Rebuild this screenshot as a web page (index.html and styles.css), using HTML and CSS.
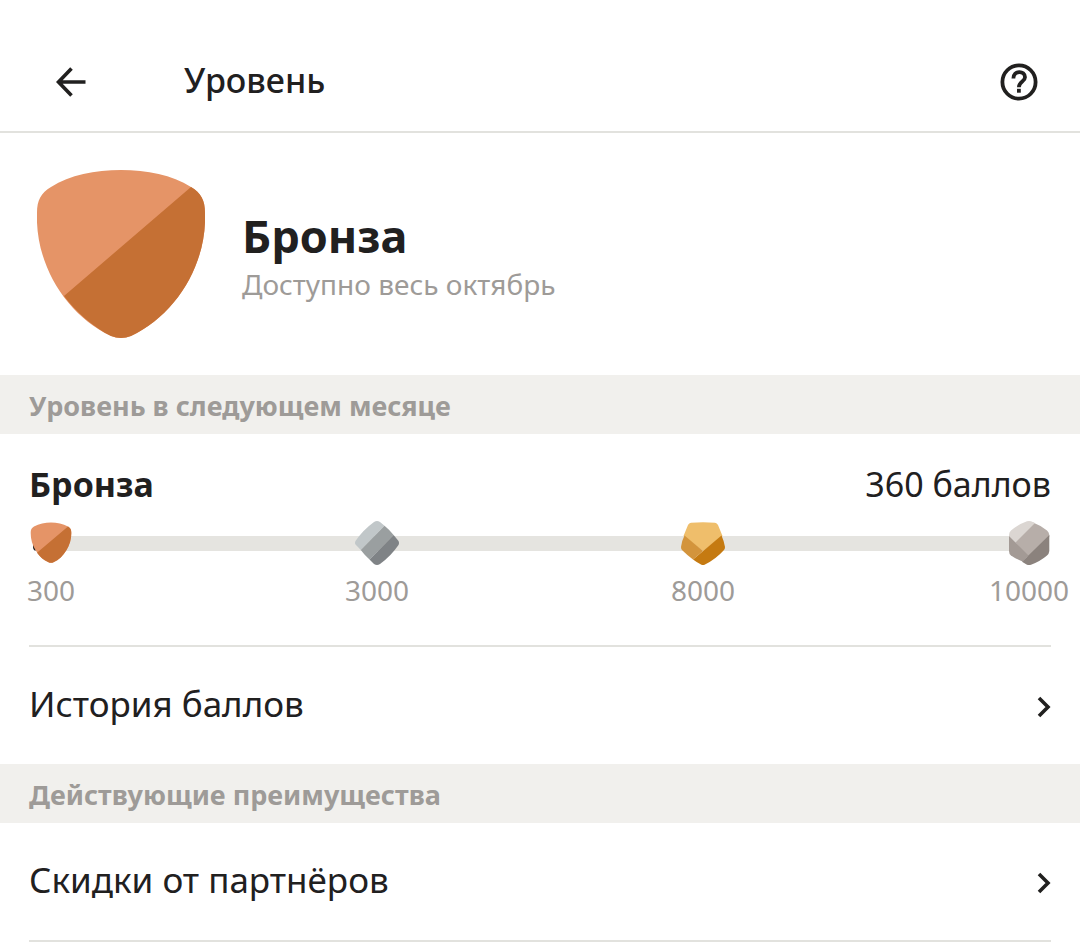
FILE: index.html
```html
<!DOCTYPE html>
<html lang="ru">
<head>
    <meta charset="utf-8">
    <meta name="viewport" content="width=device-width, initial-scale=1">
    <title>Уровень</title>
    <link rel="stylesheet" href="styles.css">
</head>
<body>
    <header class="header">
        <button class="icon-button" type="button" aria-label="Назад">
            <svg width="30" height="30" viewBox="0 0 30 30" fill="none" stroke="currentColor" stroke-width="3.6">
                <path d="M29.500 15H3M15.500 1.500L2.500 15L15.500 28.500"/>
            </svg>
        </button>
        <h1 class="header-title">Уровень</h1>
        <button class="icon-button" type="button" aria-label="Помощь">
            <svg width="38" height="38" viewBox="0 0 38 38" fill="none" stroke="currentColor" stroke-width="3.8">
                <circle cx="19" cy="19" r="16.600"/>
                <path d="M13.400 15.500C13.400 7 25 7.200 25 14.300C25 18.800 18.900 18.500 18.900 24.300"/>
                <path d="M18.900 25.800V29.700"/>
            </svg>
        </button>
    </header>

    <main>
        <section class="hero">
            <svg class="hero-badge" viewBox="0 0 168 168">
                <path fill="#e59467" d="M84 0C110 0 135 5 154 17C164 23 168 30 168 43C170 94 139 145 94 166Q84 170 74 166C29 145-2 94 0 43C0 30 4 23 14 17C33 5 58 0 84 0Z"/>
                <path fill="#c57034" d="M154 17C164 23 168 30 168 43C170 94 139 145 94 166Q84 170 74 166C56 157 40 143 27 126Z"/>
            </svg>
            <div class="hero-text">
                <h2 class="hero-title">Бронза</h2>
                <p class="hero-note">Доступно весь октябрь</p>
            </div>
        </section>

        <h3 class="section-title">Уровень в следующем месяце</h3>
        <section class="progress">
            <div class="progress-head">
                <strong>Бронза</strong>
                <span>360 баллов</span>
            </div>
            <ol class="levels">
                <li class="level">
                    <svg class="level-icon" viewBox="0 0 44 44">
                        <path fill="#21201f" d="M4 22H8V29.500H5.500Q4 28 4 26Z"/>
                        <path fill="#e59467" d="M22 1.500C28 1.500 34 2.700 39 5.500C41.500 7 42.300 8.500 42.300 12C42.500 24 35 36.500 24.500 41.300Q22 42.300 19.500 41.300C9 36.500 1.500 24 1.700 12C1.700 8.500 2.500 7 5 5.500C10 2.700 16 1.500 22 1.500Z"/>
                        <path fill="#c57034" d="M39 5.500C41.500 7 42.300 8.500 42.300 12C42.500 24 35 36.500 24.500 41.300Q22 42.300 19.500 41.300C15 39.300 11 36 8 31.700Z"/>
                    </svg>
                    <span>300</span>
                </li>
                <li class="level">
                    <svg class="level-icon" viewBox="0 0 44 44">
                        <path fill="#c1c7c9" d="M0.500 20Q8 9 19 1Q22-1 25 1L29.500 4.800L5.800 29Q2.500 25.500 0.500 23.500Q-0.500 22 0.500 20Z"/>
                        <path fill="#9a9fa0" d="M29.500 4.800Q34.500 8.800 38.600 14L14.500 38.500Q9.500 34 5.800 29Z"/>
                        <path fill="#7f8386" d="M38.600 14L43.500 20Q44.500 22 43.500 24Q36 35 25 43Q22 45 19 43L14.500 38.500Z"/>
                    </svg>
                    <span>3000</span>
                </li>
                <li class="level">
                    <svg class="level-icon" viewBox="0 0 44 44">
                        <path fill="#efbe6b" d="M10 1.800Q22 0.500 34 1.800Q36 2 37 4L41.500 15L22 30L2.500 15L7 4Q8 2 10 1.800Z"/>
                        <path fill="#d3943c" d="M3.500 14.500L22 30L12 38.500Q6 34 1 29Q0 28 0 26Q1 19 3.500 14.500Z"/>
                        <path fill="#c57a11" d="M40.500 14.500Q43 20 44 26Q44 28 43 29Q35 38 24 43.500Q22 44.500 20 43.500Q16 41.500 12 38.500Z"/>
                    </svg>
                    <span>8000</span>
                </li>
                <li class="level">
                    <svg class="level-icon" viewBox="0 0 44 44">
                        <path fill="#b7aea9" d="M26 1.500Q34 4.500 40 9.500Q42 11 42.300 14V16L21 36L8 21L22 5Z"/>
                        <path fill="#dbd6d2" d="M2 15V14Q2 11 4 9.500Q11 3.500 20 0.300Q22-0.300 24 0.300L28 2L8.500 21.500Z"/>
                        <path fill="#a39a95" d="M2 15L21.500 34.500L15.500 40.500Q9 38 4 34.500Q2 33 2 30Z"/>
                        <path fill="#8b827d" d="M42.300 14V30Q42 33 40 34.500Q33 40.500 24 43.700Q22 44.300 20 43.700L15 40.800Z"/>
                    </svg>
                    <span>10000</span>
                </li>
            </ol>
        </section>
        <a class="row" href="#">
            <span>История баллов</span>
            <svg class="chevron" viewBox="0 0 14 22"><path d="M2 2L11 11L2 20"/></svg>
        </a>

        <h3 class="section-title">Действующие преимущества</h3>
        <a class="row" href="#">
            <span>Скидки от партнёров</span>
            <svg class="chevron" viewBox="0 0 14 22"><path d="M2 2L11 11L2 20"/></svg>
        </a>
        <hr class="divider">
    </main>
</body>
</html>
```

FILE: styles.css
```css
* {
    box-sizing: border-box;
}

body {
    margin: 0;
    background: #fff;
    color: #21201f;
    font-family: "Noto Sans", sans-serif;
    font-size: 34px;
    line-height: 48px;
}

h1, h2, h3, p, ol {
    margin: 0;
    padding: 0;
}

/* header */
.header {
    display: flex;
    align-items: center;
    padding: 41px 31px 8px 41px;
    border-bottom: 2px solid #e2e2de;
}

.header-title {
    flex: 1;
    margin-left: 83px;
    padding-bottom: 4px;
    font-size: 34px;
    font-weight: 500;
}

.icon-button {
    display: flex;
    align-items: center;
    justify-content: center;
    width: 60px;
    height: 82px;
    padding: 0;
    border: 0;
    background: none;
    color: inherit;
}

/* current level */
.hero {
    display: flex;
    align-items: center;
    gap: 37px;
    padding: 37px;
}

.hero-badge {
    flex: none;
    width: 168px;
    height: 168px;
}

.hero-text {
    padding-top: 4px;
}

.hero-title {
    font-size: 45px;
    font-weight: 700;
    line-height: 56px;
}

.hero-note {
    color: #9e9b98;
    font-size: 28px;
    line-height: 40px;
}

.section-title {
    padding: 11px 29px 8px;
    background: #f1f0ed;
    color: #9e9b98;
    font-size: 27px;
    font-weight: 700;
    line-height: 40px;
}

/* next month progress */
.progress {
    margin: 0 29px;
    padding: 26px 0 35px;
    border-bottom: 2px solid #e2e2de;
}

.progress-head {
    display: flex;
    justify-content: space-between;
}

.levels {
    position: relative;
    display: flex;
    justify-content: space-between;
    margin-top: 13px;
    list-style: none;
}

.levels::before {
    content: "";
    position: absolute;
    top: 15px;
    left: 22px;
    right: 22px;
    height: 15px;
    background: #e5e4e0;
}

.level {
    position: relative;
    display: flex;
    flex-direction: column;
    align-items: center;
    gap: 5px;
    width: 44px;
    color: #9e9b98;
    font-size: 28px;
    line-height: 40px;
}

.level-icon {
    width: 44px;
    height: 44px;
}

/* links */
.row {
    display: flex;
    align-items: center;
    justify-content: space-between;
    padding: 33px 29px 36px;
    color: inherit;
    font-size: 35px;
    text-decoration: none;
}

.chevron {
    width: 14px;
    height: 22px;
    margin-top: 5px;
    fill: none;
    stroke: currentColor;
    stroke-width: 3.6;
}

.divider {
    margin: 0 29px;
    border: 0;
    border-top: 2px solid #e2e2de;
}
```
